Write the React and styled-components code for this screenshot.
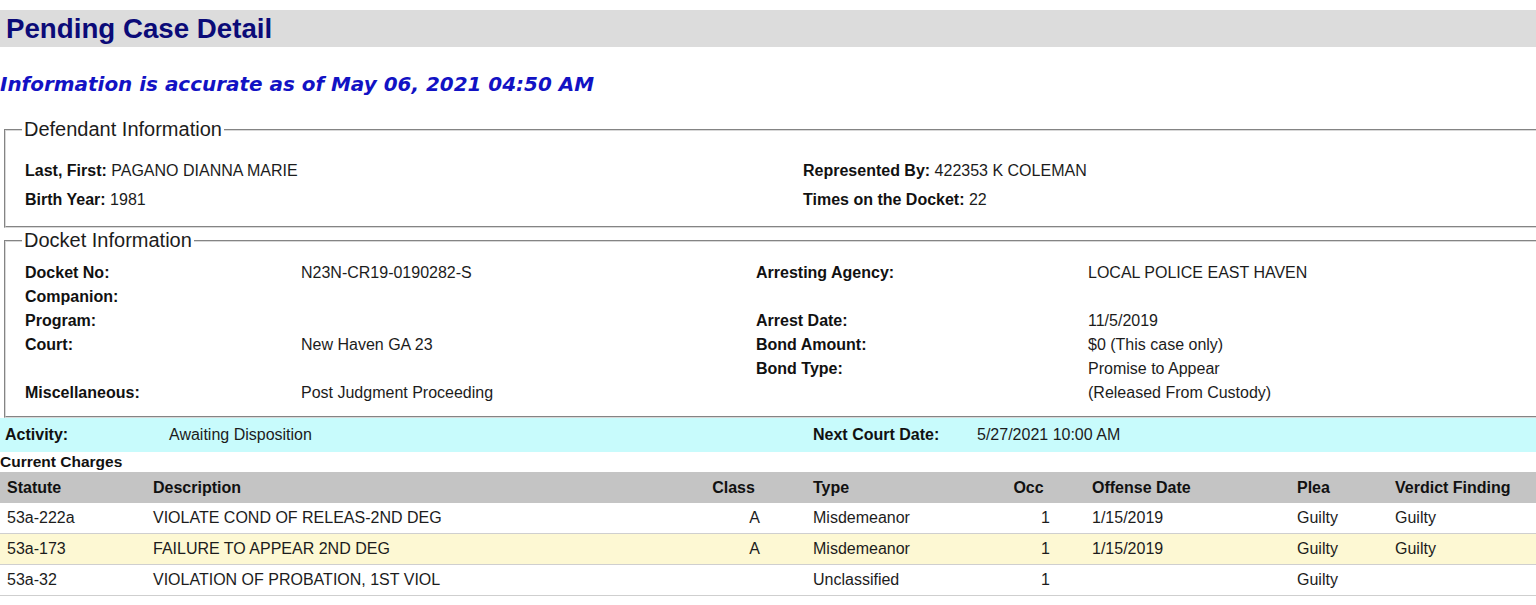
import React from "react";
import styled, { createGlobalStyle } from "styled-components";

const Global = createGlobalStyle`
  html, body { margin: 0; padding: 0; background: #ffffff; }
  body {
    font-family: "Liberation Sans", Arial, sans-serif;
    font-size: 16px;
    color: #1c1c1c;
    overflow: hidden;
  }
`;

const Page = styled.div`
  width: 1536px;
  overflow: hidden;
  padding-top: 10px;
`;

const TitleBar = styled.div`
  background: #dcdcdc;
  height: 37px;
  display: flex;
  align-items: center;
  padding-left: 6px;
`;

const Title = styled.h1`
  margin: 0;
  font-family: "Liberation Sans", Arial, sans-serif;
  font-size: 27.7px;
  font-weight: bold;
  color: #0b0b78;
  line-height: 37px;
`;

const AsOf = styled.div`
  margin-top: 25px;
  font-family: "DejaVu Sans", Verdana, sans-serif;
  font-weight: bold;
  font-style: italic;
  font-size: 19.95px;
  line-height: 24px;
  color: #1212c4;
`;

const Fieldset = styled.fieldset`
  margin: ${(p) => p.$mt}px -40px 0 4px;
  border: 2px groove #d8d8d8;
  border-right: none;
  padding: ${(p) => p.$pt}px 0 ${(p) => p.$pb}px 19px;
  min-width: 0;
`;

const Legend = styled.legend`
  font-size: 20px;
  line-height: 23px;
  padding: 0 2px;
  margin-left: -3px;
  color: #1c1c1c;
`;

const InfoGrid = styled.div`
  display: grid;
  grid-template-columns: ${(p) => p.$cols};
  grid-auto-rows: ${(p) => p.$row}px;
  align-items: center;
`;

const Label = styled.span`
  font-weight: bold;
  color: #111;
`;

const Value = styled.span`
  color: #1c1c1c;
`;

const Field = styled.div`
  white-space: nowrap;
`;

const ActivityBand = styled.div`
  background: #c8fbfc;
  height: 34px;
  display: grid;
  grid-template-columns: 164px 644px 164px 1fr;
  align-items: center;
  padding-left: 5px;
`;

const SectionTitle = styled.div`
  font-weight: bold;
  font-size: 15.5px;
  line-height: 20px;
  color: #111;
`;

const Row = styled.div`
  display: grid;
  grid-template-columns: 146px 554px 67px 233px 57px 233px 98px 1fr;
  height: 31px;
  box-sizing: border-box;
  align-items: center;
  background: ${(p) => p.$bg};
  border-bottom: ${(p) => (p.$head ? "none" : "1px solid #cfcfcf")};
  font-weight: ${(p) => (p.$head ? "bold" : "normal")};
  color: ${(p) => (p.$head ? "#111" : "#1c1c1c")};
`;

const Cell = styled.div`
  padding: 0 ${(p) => p.$pr ?? 7}px 0 ${(p) => p.$pl ?? 7}px;
  text-align: ${(p) => p.$align || "left"};
  white-space: nowrap;
  overflow: hidden;
`;

const columns = [
  { key: "statute", title: "Statute" },
  { key: "desc", title: "Description" },
  { key: "cls", title: "Class", hAlign: "center", dAlign: "right" },
  { key: "type", title: "Type", pl: 46 },
  { key: "occ", title: "Occ", hAlign: "center", dAlign: "right" },
  { key: "date", title: "Offense Date", pl: 35 },
  { key: "plea", title: "Plea" },
  { key: "verdict", title: "Verdict Finding" },
];

const charges = [
  { statute: "53a-222a", desc: "VIOLATE COND OF RELEAS-2ND DEG", cls: "A", type: "Misdemeanor", occ: "1", date: "1/15/2019", plea: "Guilty", verdict: "Guilty" },
  { statute: "53a-173", desc: "FAILURE TO APPEAR 2ND DEG", cls: "A", type: "Misdemeanor", occ: "1", date: "1/15/2019", plea: "Guilty", verdict: "Guilty" },
  { statute: "53a-32", desc: "VIOLATION OF PROBATION, 1ST VIOL", cls: "", type: "Unclassified", occ: "1", date: "", plea: "Guilty", verdict: "" },
];

const docket = [
  ["Docket No:", "N23N-CR19-0190282-S", "Arresting Agency:", "LOCAL POLICE EAST HAVEN"],
  ["Companion:", "", "", ""],
  ["Program:", "", "Arrest Date:", "11/5/2019"],
  ["Court:", "New Haven GA 23", "Bond Amount:", "$0 (This case only)"],
  ["", "", "Bond Type:", "Promise to Appear"],
  ["Miscellaneous:", "Post Judgment Proceeding", "", "(Released From Custody)"],
];

export default function App() {
  return (
    <>
      <Global />
      <Page>
        <TitleBar>
          <Title>Pending Case Detail</Title>
        </TitleBar>
        <AsOf>Information is accurate as of May 06, 2021 04:50 AM</AsOf>

        <Fieldset $mt={22} $pt={15} $pb={12}>
          <Legend>Defendant Information</Legend>
          <InfoGrid $cols="778px 1fr" $row={29}>
            <Field>
              <Label>Last, First:</Label> <Value>PAGANO DIANNA MARIE</Value>
            </Field>
            <Field>
              <Label>Represented By:</Label> <Value>422353 K COLEMAN</Value>
            </Field>
            <Field>
              <Label>Birth Year:</Label> <Value>1981</Value>
            </Field>
            <Field>
              <Label>Times on the Docket:</Label> <Value>22</Value>
            </Field>
          </InfoGrid>
        </Fieldset>

        <Fieldset $mt={1} $pt={9} $pb={11}>
          <Legend>Docket Information</Legend>
          <InfoGrid $cols="276px 455px 332px 1fr" $row={24}>
            {docket.map((r, i) => (
              <React.Fragment key={i}>
                <Label>{r[0]}</Label>
                <Value>{r[1]}</Value>
                <Label>{r[2]}</Label>
                <Value>{r[3]}</Value>
              </React.Fragment>
            ))}
          </InfoGrid>
        </Fieldset>

        <ActivityBand>
          <Label>Activity:</Label>
          <Value>Awaiting Disposition</Value>
          <Label>Next Court Date:</Label>
          <Value>5/27/2021 10:00 AM</Value>
        </ActivityBand>

        <SectionTitle>Current Charges</SectionTitle>
        <Row $head $bg="#c4c4c4">
          {columns.map((c) => (
            <Cell key={c.key} $align={c.hAlign} $pl={c.pl}>
              {c.title}
            </Cell>
          ))}
        </Row>
        {charges.map((ch, i) => (
          <Row key={i} $bg={i === 1 ? "#fdf8d3" : "#ffffff"}>
            {columns.map((c) => (
              <Cell key={c.key} $align={c.dAlign} $pl={c.pl}>
                {ch[c.key]}
              </Cell>
            ))}
          </Row>
        ))}
      </Page>
    </>
  );
}
